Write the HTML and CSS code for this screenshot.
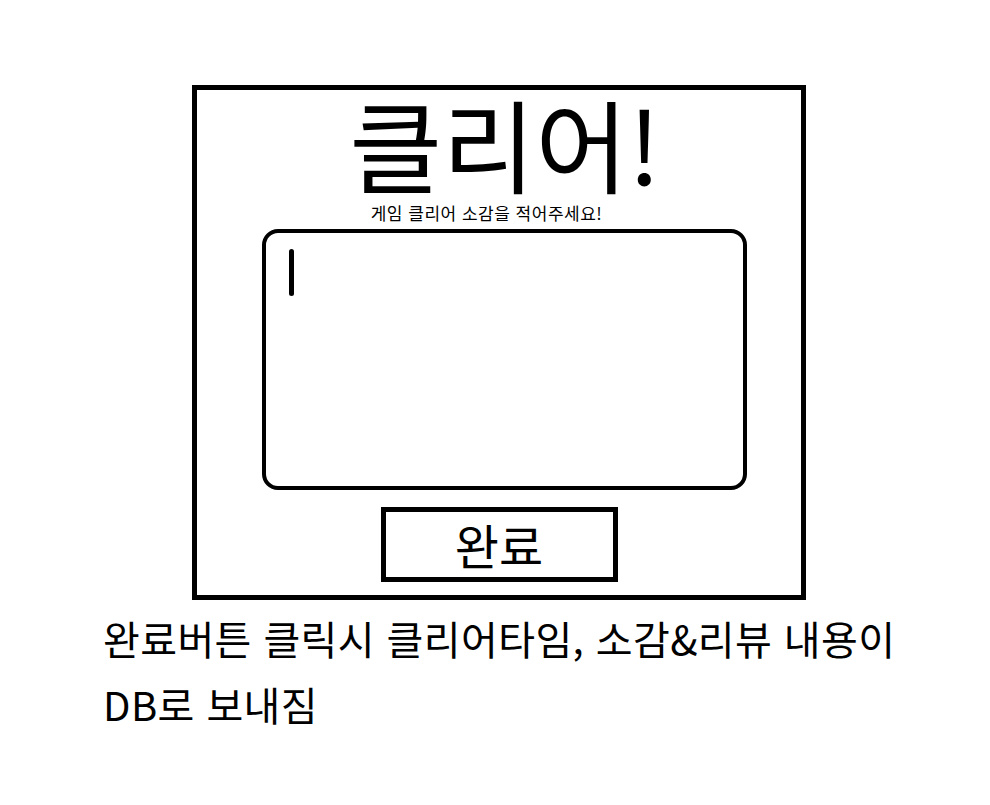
FILE: index.html
```html
<!DOCTYPE html>
<html lang="ko">

<head>
  <title>클리어!</title>
  <meta charset="UTF-8">
  <link rel="stylesheet" href="styles.css">
</head>

<body>
  <div class="pagina">
    <div class="cartao">
      <h1 class="titulo">클리어!</h1>
      <p class="legenda">게임 클리어 소감을 적어주세요!</p>
      <div class="caixa-texto">
        <span class="cursor"></span>
      </div>
      <div class="botao">완료</div>
    </div>
    <p class="nota">완료버튼 클릭시 클리어타임, 소감&amp;리뷰 내용이<br>DB로 보내짐</p>
  </div>
</body>

</html>
```

FILE: styles.css
```css
* {
  font-family: 'Noto Sans CJK KR', sans-serif;
  margin: 0;
  padding: 0;
  color: black;
  box-sizing: border-box;
}

body {
  background-color: white;
}

.pagina {
  padding: 85px 0 0 103px;
}

.cartao {
  width: 614px;
  height: 515px;
  margin-left: 89px;
  border: 5px solid black;
  display: flex;
  flex-direction: column;
  align-items: center;
}

.titulo {
  font-size: 101px;
  font-weight: 400;
  line-height: 1;
  margin-top: 2px;
  margin-left: 12px;
}

.legenda {
  font-size: 17px;
  letter-spacing: 0.5px;
  line-height: 1;
  margin-top: 11px;
  margin-left: -25px;
}

.caixa-texto {
  width: 485px;
  height: 261px;
  margin-top: 8px;
  margin-left: 11px;
  border: 4px solid black;
  border-radius: 16px;
  padding: 16px 23px;
}

.cursor {
  display: block;
  width: 5px;
  height: 47px;
  border-radius: 3px;
  background-color: black;
}

.botao {
  width: 237px;
  height: 75px;
  margin-top: 17px;
  border: 5px solid black;
  font-size: 48px;
  line-height: 65px;
  text-align: center;
}

.nota {
  font-size: 40px;
  letter-spacing: 0.4px;
  line-height: 66px;
  margin-top: 5px;
}
```
